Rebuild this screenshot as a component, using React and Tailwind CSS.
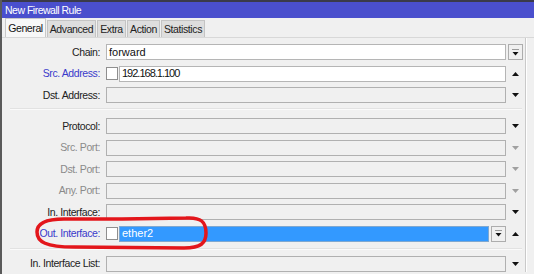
import React from "react";

function DownArrow({ dim }) {
  return (
    <svg width="9" height="6" viewBox="0 0 9 6">
      <path d="M1 1 H8 L4.5 5 Z" fill={dim ? "#a0a0a0" : "#111"} />
    </svg>
  );
}

function UpArrow() {
  return (
    <svg width="9" height="6" viewBox="0 0 9 6">
      <path d="M1 5 H8 L4.5 1 Z" fill="#111" />
    </svg>
  );
}

function DropButton() {
  return (
    <div className="w-[15px] h-[16px] border border-[#adadad] bg-[#f0f0f0] flex items-center justify-center">
      <svg width="9" height="9" viewBox="0 0 9 9">
        <rect x="1" y="1" width="7" height="1" fill="#9a9a9a" />
        <path d="M1.5 4 H7.5 L4.5 7.5 Z" fill="#111" />
      </svg>
    </div>
  );
}

function Row({ label, tone = "normal", value, check, enabled, selected, side, tight }) {
  const labelColor =
    tone === "blue" ? "text-[#3a3acb]" : tone === "dim" ? "text-[#8a8a8a]" : "text-[#222]";
  return (
    <div className="flex items-center h-[16px]">
      <div className={`w-[99px] text-right pr-[1px] text-[10.5px] tracking-[-0.4px] ${labelColor}`}>
        {label}:
      </div>
      <div className="ml-[5px] flex items-center w-[400px] h-full">
        {check && (
          <div className="w-[12px] h-[13px] mr-[1px] border border-[#8f8f8f] bg-white shrink-0" />
        )}
        <div
          className={`flex-1 h-full flex items-center px-[2px] border ${tight ? "tracking-[-1px]" : ""} ${
            selected
              ? "bg-[#3399ff] border-[#7fa8d0] text-white"
              : enabled
              ? "bg-white border-[#b5b5b5] text-[#111]"
              : "bg-[#f0f0f0] border-[#b0b0b0]"
          }`}
        >
          {value}
        </div>
        {side === "dropbtn-in" && (
          <div className="ml-[2px]">
            <DropButton />
          </div>
        )}
      </div>
      <div className="w-[16px] ml-[1px] flex items-center justify-center">
        {side === "dropbtn" && <DropButton />}
        {(side === "up" || side === "dropbtn-in") && <UpArrow />}
        {side === "down" && <DownArrow />}
        {side === "dim" && <DownArrow dim />}
      </div>
    </div>
  );
}

function Separator() {
  return <div className="ml-[8px] w-[512px] border-t border-[#e2e2e2] border-b border-b-[#fafafa]" />;
}

export default function App() {
  const tabs = [
    ["Advanced", "w-[49px]"],
    ["Extra", "w-[29px]"],
    ["Action", "w-[33px]"],
    ["Statistics", "w-[44px]"],
  ];
  return (
    <div
      className="relative w-[534px] h-[274px] overflow-hidden bg-[#f0f0f0] border-l-2 border-[#5a5a5a] text-[11px] leading-none"
      style={{ fontFamily: '"Liberation Sans", Arial, sans-serif' }}
    >
      <div className="h-[18px] bg-[#4a4fcd] border-t-2 border-[#3a3a4a] text-white flex items-center pl-[3px] text-[10.5px] tracking-[-0.5px]">
        New Firewall Rule
      </div>

      <div className="h-[20px] flex items-end pl-[3px] border-b border-[#d8d8d8] text-[10.5px] tracking-[-0.4px]">
        <div className="h-[19px] w-[41px] bg-[#f7f7f7] border border-b-0 border-[#c8c8c8] flex items-center justify-center text-[#111]">
          General
        </div>
        {tabs.map(([t, w]) => (
          <div
            key={t}
            className={`h-[17px] ml-[1px] ${w} bg-[#dedede] border border-b-0 border-[#c4c4c4] flex items-center justify-center text-[#222]`}
          >
            {t}
          </div>
        ))}
      </div>

      <div className="relative flex pt-[6px]">
        <div className="flex flex-col w-[523px]">
          <div className="flex flex-col gap-[5.5px]">
            <Row label="Chain" value="forward" enabled side="dropbtn" />
            <Row label="Src. Address" tone="blue" value="192.168.1.100" check enabled tight side="up" />
            <Row label="Dst. Address" side="down" />
          </div>
          <div className="mt-[5px] mb-[8px]">
            <Separator />
          </div>
          <div className="flex flex-col gap-[5.5px]">
            <Row label="Protocol" side="down" />
            <Row label="Src. Port" tone="dim" side="dim" />
            <Row label="Dst. Port" tone="dim" side="dim" />
            <Row label="Any. Port" tone="dim" side="dim" />
            <Row label="In. Interface" side="down" />
            <Row label="Out. Interface" tone="blue" value="ether2" check selected side="dropbtn-in" />
          </div>
          <div className="mt-[6px] mb-[6px]">
            <Separator />
          </div>
          <Row label="In. Interface List" side="down" />
        </div>
        <div className="mt-[-6px] w-[2px] border-l border-[#c9c9c9] border-r border-r-white" />
      </div>

      <svg className="absolute left-0 top-0 pointer-events-none" width="534" height="274">
        <path
          d="M62 219 C44 219 35 223 35 232 C35 242 44 247 72 247 L182 248 C199 248 204 243 204 233 C204 222 199 217 184 218 L120 219 Z"
          fill="none"
          stroke="#e3161b"
          strokeWidth="3.5"
        />
      </svg>
    </div>
  );
}
